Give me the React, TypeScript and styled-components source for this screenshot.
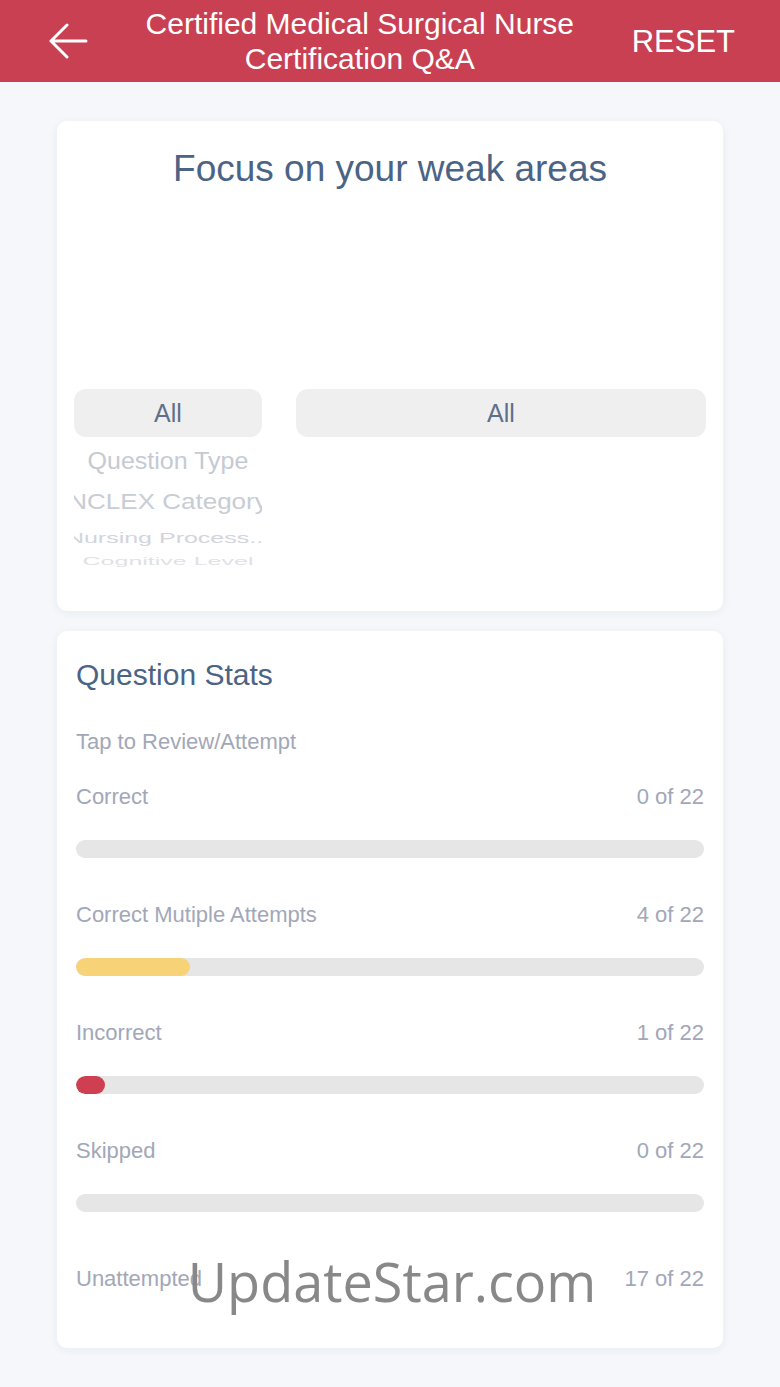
import React from "react";
import styled, { createGlobalStyle } from "styled-components";

const Global = createGlobalStyle`
  html, body { margin: 0; padding: 0; }
  body {
    background: #f5f7fa;
    font-family: "Liberation Sans", Arial, sans-serif;
    -webkit-font-smoothing: antialiased;
  }
  * { box-sizing: border-box; }
`;

const Page = styled.div`
  position: relative;
  width: 780px;
  min-height: 1387px;
  background: #f5f7fa;
`;

const Header = styled.header`
  height: 82px;
  background: #c94053;
  display: flex;
  align-items: center;
  padding: 0 45px 0 48px;
  color: #ffffff;
`;

const BackButton = styled.button`
  width: 40px;
  height: 36px;
  padding: 0;
  border: 0;
  background: transparent;
  display: flex;
  align-items: center;
  justify-content: center;
  cursor: pointer;
`;

const Title = styled.h1`
  flex: 1;
  margin: 0;
  text-align: center;
  font-size: 30px;
  line-height: 35px;
  font-weight: 400;
  color: #ffffff;
`;

const Reset = styled.button`
  border: 0;
  background: transparent;
  color: #ffffff;
  font-family: "Liberation Sans", Arial, sans-serif;
  font-size: 31px;
  padding: 0;
  margin-top: 2px;
  cursor: pointer;
`;

const Content = styled.main`
  display: flex;
  flex-direction: column;
  gap: 20px;
  padding: 39px 57px 0;
`;

const Card = styled.section<{ $pad: string }>`
  background: #ffffff;
  border-radius: 10px;
  box-shadow: 0 2px 10px rgba(40, 60, 90, 0.06);
  padding: ${(p) => p.$pad};
  display: flex;
  flex-direction: column;
`;

const FocusTitle = styled.h2`
  margin: 0;
  text-align: center;
  font-size: 37px;
  line-height: 44px;
  font-weight: 400;
  color: #4b6385;
`;

const ChartArea = styled.div`
  height: 198px;
`;

const Pickers = styled.div`
  display: grid;
  grid-template-columns: 188px 1fr;
  column-gap: 34px;
  align-items: start;
`;

const PickerColumn = styled.div`
  display: flex;
  flex-direction: column;
  overflow: hidden;
`;

const Pill = styled.div`
  height: 48px;
  border-radius: 12px;
  background: #efeff0;
  display: flex;
  align-items: center;
  justify-content: center;
  font-size: 25px;
  color: #5f6f8b;
`;

const Wheel = styled.div`
  display: flex;
  flex-direction: column;
`;

const WheelItem = styled.div<{ $h: number; $scale: number; $color: string; $size: number }>`
  height: ${(p) => p.$h}px;
  display: flex;
  align-items: center;
  justify-content: center;
  white-space: nowrap;
  font-size: ${(p) => p.$size}px;
  line-height: 1;
  color: ${(p) => p.$color};
  transform: scaleY(${(p) => p.$scale});
`;

const StatsTitle = styled.h2`
  margin: 0;
  font-size: 30px;
  line-height: 34px;
  font-weight: 400;
  color: #4b6385;
`;

const Hint = styled.div`
  margin-top: 37px;
  font-size: 22px;
  line-height: 26px;
  color: #a2a7b7;
`;

const StatList = styled.div`
  margin-top: 29px;
  display: flex;
  flex-direction: column;
  gap: 44px;
`;

const StatRow = styled.div<{ $extra?: number }>`
  display: flex;
  flex-direction: column;
  gap: 30px;
  margin-top: ${(p) => p.$extra ?? 0}px;
`;

const StatLabels = styled.div`
  display: flex;
  justify-content: space-between;
  font-size: 22px;
  line-height: 26px;
  color: #a2a7b7;
`;

const Track = styled.div`
  height: 18px;
  border-radius: 9px;
  background: #e6e6e7;
  overflow: hidden;
`;

const Fill = styled.div<{ $color: string }>`
  height: 100%;
  border-radius: 9px;
  background: ${(p) => p.$color};
`;

const Watermark = styled.div`
  position: absolute;
  left: 0;
  right: 0;
  top: 1254px;
  text-align: center;
  font-family: "Open Sans", "Noto Sans", sans-serif;
  font-size: 54px;
  line-height: 54px;
  color: #888888;
  pointer-events: none;
  transform: translateX(2px);
`;

const stats = [
  { label: "Correct", value: 0, color: "#f7d277", bar: true },
  { label: "Correct Mutiple Attempts", value: 4, color: "#f7d277", bar: true },
  { label: "Incorrect", value: 1, color: "#cd3f51", bar: true },
  { label: "Skipped", value: 0, color: "#cd3f51", bar: true },
  { label: "Unattempted", value: 17, color: "#cccccc", bar: false },
];

const wheel = [
  { text: "Question Type", h: 48, scale: 0.92, color: "#c5cad3", size: 25 },
  { text: "NCLEX Category", h: 34, scale: 0.82, color: "#c8ccd4", size: 26 },
  { text: "Nursing Process...", h: 36, scale: 0.62, color: "#d2d5dc", size: 25 },
  { text: "Cognitive Level", h: 12, scale: 0.42, color: "#dfe1e5", size: 25 },
];

export default function App() {
  const total = 22;
  return (
    <Page>
      <Global />
      <Header>
        <BackButton aria-label="Back">
          <svg width="40" height="36" viewBox="0 0 40 36" fill="none">
            <path
              d="M3 18H38M19 2L3 18L19 34"
              stroke="#ffffff"
              strokeWidth="3"
              strokeLinecap="round"
              strokeLinejoin="round"
            />
          </svg>
        </BackButton>
        <Title>
          Certified Medical Surgical Nurse
          <br />
          Certification Q&amp;A
        </Title>
        <Reset>RESET</Reset>
      </Header>
      <Content>
        <Card $pad="26px 17px 44px">
          <FocusTitle>Focus on your weak areas</FocusTitle>
          <ChartArea />
          <Pickers>
            <PickerColumn>
              <Pill>All</Pill>
              <Wheel>
                {wheel.map((w) => (
                  <WheelItem key={w.text} $h={w.h} $scale={w.scale} $color={w.color} $size={w.size}>
                    {w.text}
                  </WheelItem>
                ))}
              </Wheel>
            </PickerColumn>
            <PickerColumn>
              <Pill>All</Pill>
            </PickerColumn>
          </Pickers>
        </Card>
        <Card $pad="27px 19px 56px">
          <StatsTitle>Question Stats</StatsTitle>
          <Hint>Tap to Review/Attempt</Hint>
          <StatList>
            {stats.map((s) => (
              <StatRow key={s.label} $extra={s.bar ? 0 : 10}>
                <StatLabels>
                  <span>{s.label}</span>
                  <span>
                    {s.value} of {total}
                  </span>
                </StatLabels>
                {s.bar && (
                  <Track>
                    {s.value > 0 && (
                      <Fill $color={s.color} style={{ width: `${(s.value / total) * 100}%` }} />
                    )}
                  </Track>
                )}
              </StatRow>
            ))}
          </StatList>
        </Card>
      </Content>
      <Watermark>UpdateStar.com</Watermark>
    </Page>
  );
}
